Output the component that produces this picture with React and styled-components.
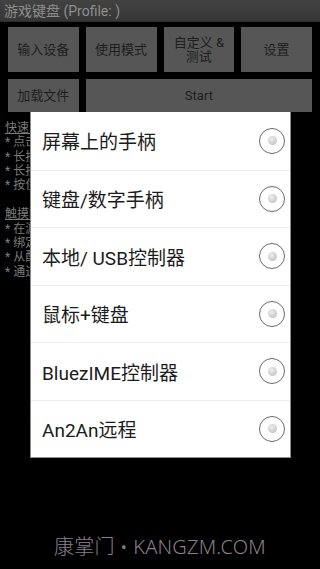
import React from "react";
import styled, { createGlobalStyle } from "styled-components";

const Global = createGlobalStyle`
  html, body { margin: 0; padding: 0; background: #000; }
  body { font-family: Roboto, "Noto Sans CJK SC", sans-serif; }
  * { box-sizing: border-box; }
`;

const Screen = styled.div`
  position: relative;
  width: 320px;
  height: 569px;
  overflow: hidden;
  background: #000;
`;

const TitleBar = styled.div`
  height: 22px;
  background: linear-gradient(#424242, #363636);
  border-bottom: 1px solid #2a2a2a;
  color: #8e8e8e;
  font-size: 14px;
  line-height: 22px;
  padding-left: 4px;
  white-space: nowrap;
`;

const ButtonGrid = styled.div`
  display: grid;
  grid-template-columns: repeat(4, 1fr);
  grid-template-rows: 45px 33px;
  gap: 7px 7px;
  padding: 5px 8px 0;
`;

const Btn = styled.div`
  grid-column: span ${(p) => p.span || 1};
  background: #565656;
  color: #1e1e1e;
  font-size: 13px;
  line-height: 14px;
  display: flex;
  align-items: center;
  justify-content: center;
  text-align: center;
`;

const Help = styled.div`
  padding: 9px 0 0 5px;
  color: #7c7c7c;
  font-size: 12px;
  line-height: 14.3px;
  white-space: nowrap;
`;

const HelpHead = styled.div`
  text-decoration: underline;
`;

const HelpLine = styled.div``;

const Gap = styled.div`
  height: 15px;
`;

const Dialog = styled.div`
  position: absolute;
  left: 30px;
  top: 112px;
  width: 261px;
  background: #fff;
  border-left: 1px solid #8a8a8a;
  border-right: 1px solid #8a8a8a;
  border-bottom: 1px solid #8a8a8a;
  display: flex;
  flex-direction: column;
`;

const Row = styled.div`
  height: 57.5px;
  display: flex;
  align-items: center;
  justify-content: space-between;
  padding: 0 5px 0 11px;
  border-top: ${(p) => (p.first ? "none" : "1px solid #eeeeee")};
`;

const Label = styled.span`
  font-size: 19px;
  color: #1c1c1c;
  font-family: Roboto, "Noto Sans CJK SC", sans-serif;
`;

const Radio = styled.span`
  width: 26px;
  height: 26px;
  border-radius: 50%;
  border: 1.6px solid #6a6a6a;
  display: flex;
  align-items: center;
  justify-content: center;
  &::after {
    content: "";
    width: 9px;
    height: 9px;
    border-radius: 50%;
    background: radial-gradient(circle at 40% 35%, #eeeeee, #b8b8b8);
  }
`;

const Watermark = styled.div`
  position: absolute;
  left: 0;
  right: 0;
  bottom: 9px;
  text-align: center;
  color: #8a7f8c;
  font-family: "Noto Sans", "Noto Sans CJK SC", sans-serif;
  font-weight: 300;
  font-size: 20px;
  letter-spacing: 0.2px;
`;

const options = [
  "屏幕上的手柄",
  "键盘/数字手柄",
  "本地/ USB控制器",
  "鼠标+键盘",
  "BluezIME控制器",
  "An2An远程",
];

export default function App() {
  return (
    <Screen>
      <Global />
      <TitleBar>游戏键盘 (Profile: )</TitleBar>
      <ButtonGrid>
        <Btn>输入设备</Btn>
        <Btn>使用模式</Btn>
        <Btn>
          自定义 &amp;
          <br />
          测试
        </Btn>
        <Btn>设置</Btn>
        <Btn>加载文件</Btn>
        <Btn span={3}>Start</Btn>
      </ButtonGrid>
      <Help>
        <HelpHead>快速入门</HelpHead>
        <HelpLine>* 点击"输入设备"选择您的控制器</HelpLine>
        <HelpLine>* 长按按钮可以查看帮助说明</HelpLine>
        <HelpLine>* 长按屏幕上的控件可以调整</HelpLine>
        <HelpLine>* 按住"Start"开始映射</HelpLine>
        <Gap />
        <HelpHead>触摸映射</HelpHead>
        <HelpLine>* 在游戏中绑定触摸屏上的任意位置（点)</HelpLine>
        <HelpLine>* 绑定按键到屏幕坐标</HelpLine>
        <HelpLine>* 从配置文件中加载映射</HelpLine>
        <HelpLine>* 通过设置调整灵敏度</HelpLine>
      </Help>
      <Dialog>
        {options.map((o, i) => (
          <Row key={o} first={i === 0}>
            <Label>{o}</Label>
            <Radio />
          </Row>
        ))}
      </Dialog>
      <Watermark>康掌门 • KANGZM.COM</Watermark>
    </Screen>
  );
}
